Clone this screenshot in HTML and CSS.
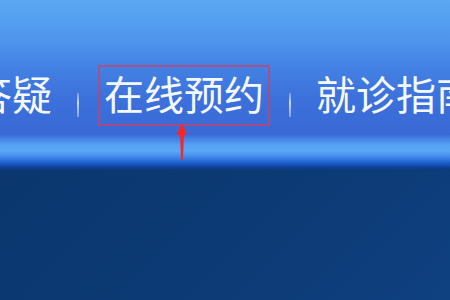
FILE: index.html
```html
<!DOCTYPE html>
<html lang="zh-CN">
<head>
<meta charset="utf-8">
<title>在线预约</title>
<link rel="stylesheet" href="styles.css">
</head>
<body>
<header class="nav-band">
  <nav class="menu">
    <span class="item">答疑</span>
    <span class="sep"></span>
    <span class="item item--marked">在线预约<span class="mark"></span><svg class="arrow" width="14" height="40" viewBox="0 0 14 40"><path d="M7 1 L12.2 13 L8.9 13 L7.9 38 L6.1 38 L5.1 13 L1.8 13 Z" fill="#ff2424"/></svg></span>
    <span class="sep"></span>
    <span class="item">就诊指南</span>
  </nav>
</header>
<div class="glow"></div>
<main class="deep"></main>
</body>
</html>
```
FILE: styles.css
```css
html, body {
  margin: 0;
  padding: 0;
  width: 450px;
  height: 300px;
  overflow: hidden;
  background: #0c3870;
}
body {
  display: flex;
  flex-direction: column;
  font-family: "Noto Sans CJK SC", "Noto Sans", sans-serif;
}
.nav-band {
  height: 135px;
  box-sizing: border-box;
  padding-top: 73px;
  background: linear-gradient(to bottom,
    #5ba8f4 0px,
    #4f95ec 40px,
    #4482e4 65px,
    #3c70da 100px,
    #3a69d5 135px);
}
.menu {
  display: flex;
  align-items: flex-start;
  margin-left: -28px;
  white-space: nowrap;
}
.item {
  position: relative;
  display: block;
  height: 40px;
  font-size: 40px;
  line-height: 40px;
  color: #f4f8ff;
  font-weight: 400;
  flex: none;
}
.sep {
  flex: none;
  width: 2px;
  height: 24px;
  margin: 20px 25px 0;
  background: linear-gradient(to bottom, rgba(210,225,255,0.35), rgba(225,235,255,0.85) 40%, rgba(210,225,255,0.45));
}
.mark {
  position: absolute;
  top: -8px;
  left: -6px;
  width: 172px;
  height: 61px;
  box-sizing: border-box;
  border: 2px solid rgba(206, 62, 104, 0.72);
}
.arrow {
  position: absolute;
  left: 71px;
  top: 49px;
}
.glow {
  height: 35px;
  flex: none;
  background: linear-gradient(to bottom,
    #3d6ed8 0px,
    #4688e6 5px,
    #56a2f4 10px,
    #5aa8f7 16px,
    #4690ec 21px,
    #2f72de 25px,
    #1a55c4 29px,
    #0f449a 32px,
    #0c3a78 35px);
}
.deep {
  flex: 1;
  background: linear-gradient(135deg, #0b376e 0%, #0c3a74 50%, #0f4080 100%);
}
```
